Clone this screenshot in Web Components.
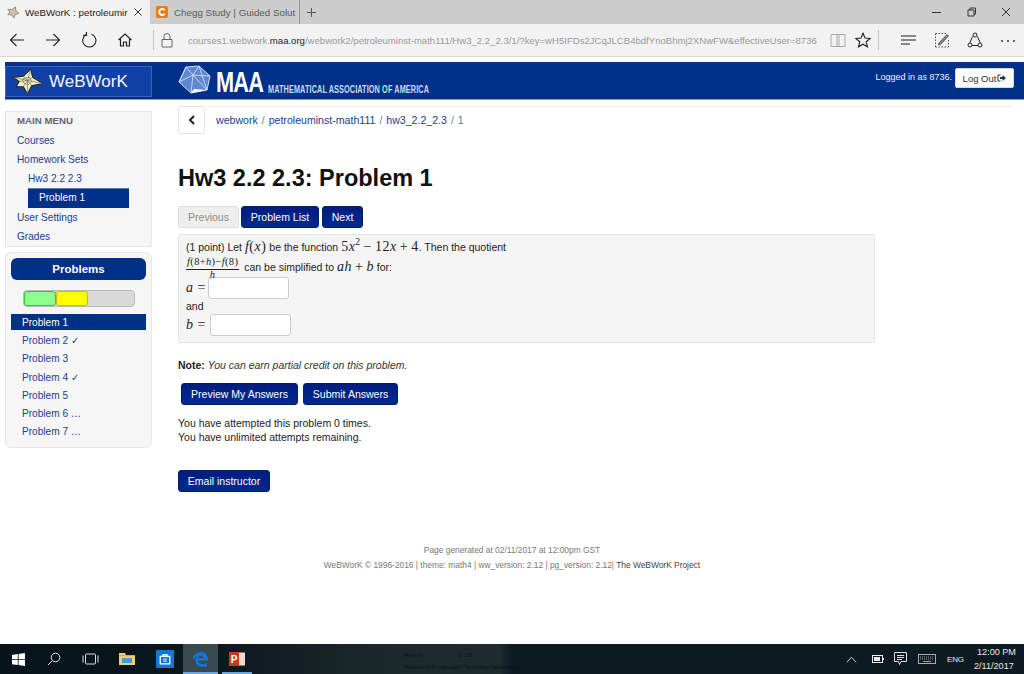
<!DOCTYPE html>
<html lang="en"><head><meta charset="utf-8"><title>WeBWorK</title>
<style>
html,body{margin:0;padding:0;height:674px;overflow:hidden;background:#fff;font-family:"Liberation Sans",Arial,sans-serif}
body{display:flex;flex-direction:column}
wb-page{flex:1;min-height:0}
</style></head><body>
<browser-chrome></browser-chrome>
<wb-page>
  <wb-header></wb-header>
  <div style="display:flex;align-items:flex-start">
    <wb-sidebar></wb-sidebar>
    <wb-content></wb-content>
  </div>
</wb-page>
<win-taskbar></win-taskbar>
<script>
function def(name, css, html){
  customElements.define(name, class extends HTMLElement{
    constructor(){super();const r=this.attachShadow({mode:"open"});r.innerHTML="<style>"+css+"</style>"+html;}
  });
}
def("wb-btn",`
:host{display:inline-flex;align-items:center;justify-content:center;box-sizing:border-box;height:22px;padding:0 8px;font-size:10.5px;color:#fff;border-radius:3px;
background:linear-gradient(#001c80,#002a8c);border:1px solid #001f6b;white-space:nowrap}
:host([off]){background:#eee;color:#8a8a8a;border-color:#ddd}`,`<slot></slot>`);

def("browser-chrome",`
:host{display:block;font-family:"Liberation Sans",Arial,sans-serif}
.tabs{height:24px;background:#ccc;display:flex;align-items:stretch;font-size:9.8px;color:#444}
.tab{width:150px;box-sizing:border-box;display:flex;align-items:center;padding-left:7px;gap:5px;white-space:nowrap}
.tab.on{background:#f2f2f2;color:#222}
.tab.b{width:150px;padding-left:6px;gap:6px;border-right:1px solid #8f8f8f;color:#5a5a5a}
.tab .t{width:100px;flex:none}
.tab.b .t{width:119px}
.plus{margin-left:5px;align-self:center;display:flex}
.win{margin-left:auto;display:flex;align-items:center}
.win svg{display:block;width:35px;height:24px}
.bar{height:32px;background:#f2f2f2;border-bottom:1px solid #d6d6d6;display:flex;align-items:center}
.ic{display:flex;width:16px;height:16px;flex:none}
.url{font-size:9.57px;color:#9a9a9a;white-space:nowrap;width:642px;flex:none}
.url b{font-weight:400;color:#222}
.sep{width:1px;height:20px;background:#c4c4c4;flex:none}
`,`
<div class="tabs">
 <div class="tab on"><svg style="flex:none" width="13" height="13" viewBox="0 0 14 14"><path d="M1 3.500 5 4 9 1 9.500 5 13 8 9 9 7.500 13 5 9.500 1 9.500 3 6.500Z" fill="#c9c6a8" stroke="#777" stroke-width=".8"/></svg><span class="t">WeBWorK : petroleumir</span>
 <svg style="margin-left:3px;flex:none" width="10" height="10" viewBox="0 0 10 10"><path d="M1.500 1.500l7 7M8.500 1.500l-7 7" stroke="#333" fill="none"/></svg></div>
 <div class="tab b"><svg style="flex:none" width="12" height="12" viewBox="0 0 12 12"><rect width="12" height="12" rx="2" fill="#ee7a14"/><path d="M8.600 4.200A3 3 0 1 0 8.600 7.800" stroke="#fff" stroke-width="2" fill="none"/></svg><span class="t">Chegg Study | Guided Solut</span></div>
 <div class="plus"><svg width="11" height="11" viewBox="0 0 11 11" style="margin-left:1px"><path d="M5.500 1v9M1 5.500h9" stroke="#555" fill="none"/></svg></div>
 <div class="win">
  <svg viewBox="0 0 35 24"><path d="M13 12.500h9" stroke="#333" fill="none"/></svg>
  <svg viewBox="0 0 35 24"><path d="M14 10h6v6h-6zM16 10V8h5.500v6H20" stroke="#333" fill="none"/></svg>
  <svg viewBox="0 0 35 24"><path d="M13 8l8 8M21 8l-8 8" stroke="#333" fill="none"/></svg>
 </div>
</div>
<div class="bar">
 <svg class="ic" style="margin-left:9px" viewBox="0 0 16 16"><path d="M15 8H1.500M7.500 2 1.500 8l6 6" stroke="#222" fill="none" stroke-width="1.100"/></svg>
 <svg class="ic" style="margin-left:20px" viewBox="0 0 16 16"><path d="M1 8h13.500M8.500 2l6 6-6 6" stroke="#222" fill="none" stroke-width="1.100"/></svg>
 <svg class="ic" style="margin-left:20px" viewBox="0 0 16 16"><path d="M5.200 2.600A6.600 6.600 0 1 0 10.500 2.200M5.500 0v3.400H2.200" stroke="#222" fill="none" stroke-width="1.100"/></svg>
 <svg class="ic" style="margin-left:20px" viewBox="0 0 16 16"><path d="M1.500 8 8 2l6.500 6M3.500 7v7h3v-4h3v4h3V7" stroke="#222" fill="none" stroke-width="1.200"/></svg>
 <span class="sep" style="margin-left:20px"></span>
 <svg class="ic" style="margin-left:5px" viewBox="0 0 16 16"><path d="M3 7.500h10v7.500H3zM5 7.500V4.500a3 3 0 0 1 6 0v3" stroke="#666" fill="none"/></svg>
 <span class="url" style="margin-left:13px">courses1.webwork.<b>maa.org</b>/webwork2/petroleuminst-math111/Hw3_2.2_2.3/1/?key=wH5IFDs2JCqJLCB4bdfYnoBhmj2XNwFW&amp;effectiveUser=8736</span>
 <svg class="ic" viewBox="0 0 16 16"><path d="M1 2.500h14v12H1zM7 2.500v12M9 2.500v12" stroke="#aaa" fill="none"/></svg>
 <svg class="ic" style="margin-left:9px" viewBox="0 0 16 16"><path d="M8 1.200 10 6l5.200.4-4 3.400 1.300 5L8 12.200 3.500 14.800l1.300-5-4-3.400L6 6Z" stroke="#222" fill="none" stroke-width="1.100"/></svg>
 <span class="sep" style="margin-left:7px"></span>
 <svg class="ic" style="margin-left:21px" viewBox="0 0 16 16"><path d="M1 4h15M1 8h15M1 12h9" stroke="#222" fill="none" stroke-width="1.100"/></svg>
 <svg class="ic" style="margin-left:18px" viewBox="0 0 16 16"><path d="M1.500 1.500h12M1.500 15h13M1.500 1.500V15M14.500 8v7" stroke="#555" stroke-dasharray="1.500 1.500" fill="none"/><path d="M5 11 13 2.500l1.500 1.500L6.500 12.500 4.500 13Z" fill="#888" stroke="#333" stroke-width=".7"/></svg>
 <svg class="ic" style="margin-left:17px" viewBox="0 0 16 16"><path d="M5.500 4.500 2.800 10.800M10.500 4.500 13.200 10.800M5.200 13.500h5.600" stroke="#222" fill="none"/><circle cx="8" cy="3" r="2" fill="none" stroke="#222"/><circle cx="3" cy="13" r="2" fill="none" stroke="#222"/><circle cx="13" cy="13" r="2" fill="none" stroke="#222"/></svg>
 <svg class="ic" style="margin-left:17px" viewBox="0 0 16 16"><circle cx="2" cy="9" r="1" fill="#333"/><circle cx="8" cy="9" r="1" fill="#333"/><circle cx="14" cy="9" r="1" fill="#333"/></svg>
</div>`);

def("wb-page",`:host{display:block;box-sizing:border-box;padding-top:5px}`,`<slot></slot>`);

def("wb-header",`
:host{display:flex;align-items:flex-start;box-sizing:border-box;height:38px;margin-left:5px;background:#003087;border-bottom:1px solid #7e9ac8;color:#fff}
.brand{box-sizing:border-box;width:147px;height:31px;margin-top:4px;background:#1140a6;border:1px solid #3c62b4;display:flex;align-items:center;padding-left:6px;gap:6px;font-size:17px;color:#f4f6fb;flex:none}
.maa{display:flex;align-items:flex-start;margin-left:26px;flex:none}
.mm{display:inline-block;font-weight:700;font-size:29px;line-height:26px;transform:scaleX(.75);transform-origin:0 0;width:46px;margin:7px 0 0 5px;letter-spacing:-1px}
.mt{display:inline-block;font-weight:700;font-size:10.5px;color:#cfdbf0;margin:16px 0 0 6px;line-height:22px;white-space:nowrap;letter-spacing:.16px;transform:scaleX(.694);transform-origin:0 0;width:161px}
.r{margin-left:auto;display:flex;align-items:flex-start;padding-right:10px}
.who{margin-top:10px;margin-right:3px;color:#eef;font-size:9px}
.out{box-sizing:border-box;width:59px;height:20px;margin-top:6px;background:#fbfbfb;color:#333;border:1px solid #d8d8d8;border-radius:2px;display:flex;align-items:center;justify-content:center;gap:1px;font-size:9.5px}
`,`
<div class="brand">
 <svg width="31" height="27" viewBox="0 0 30 26"><path d="M1 9 11 8 18 1 20 9 30 15 19 17 15 25 11 18 4 18 7 13Z" fill="#efecc9" stroke="#222" stroke-width="1"/><path d="M15 12 11 8M15 12l3-11M15 12l5-3M15 12l15 3M15 12l4 5M15 12l0 13M15 12l-4 6M15 12 7 13M15 12 1 9M11 10l6-1 2 4-3 3-4-1-2-3z" stroke="#6d6a4a" stroke-width=".6" fill="none"/></svg>
 <span>WeBWorK</span>
</div>
<div class="maa">
 <svg style="margin-top:3px" width="33" height="31" viewBox="0 0 33 31"><path d="M8 2 21 1 32 11 29 25 13 28 1 17Z" fill="#5f88d0" stroke="#cfe0fa" stroke-width="1"/><path d="M8 2 15 10 21 1M15 10 32 11M15 10 1 17M15 10 13 28M15 10 29 25M1 17 8 2M21 1 29 25" stroke="#dbe7fb" stroke-width=".8" fill="none"/><path d="M16 24 29 25 13 28Z" fill="#fff"/></svg>
 <span class="mm">MAA</span>
 <span class="mt">MATHEMATICAL ASSOCIATION OF AMERICA</span>
</div>
<div class="r"><span class="who">Logged in as 8736.</span>
<span class="out">Log Out<svg width="9" height="8" viewBox="0 0 9 8"><path d="M3.500 1H1v6h2.500" stroke="#333" fill="none"/><path d="M3 3h2.500V1L9 4 5.500 7V5H3z" fill="#333"/></svg></span></div>`);

def("wb-sidebar",`
:host{display:block;box-sizing:border-box;width:152px;padding:11px 0 0 5px;font-size:10.1px;color:#1a3d8f;flex:none}
.menu{box-sizing:border-box;height:136px;background:#f6f6f6;border:1px solid #e6e6e6;padding:0 0 0 11px}
.i{height:19.2px;line-height:19px;white-space:nowrap}
.head{font-weight:700;color:#666;font-size:9.7px;height:17.5px;line-height:15px;margin-top:1px}
.sub{padding-left:11px}
.act{margin-left:11px;width:101px;background:#003087;color:#fff;padding-left:11px;box-sizing:border-box;line-height:18px;height:19.5px;border:1px solid #5a7ab8;border-width:1px 0 0}
.prob{box-sizing:border-box;margin-top:5px;height:196px;background:#f6f6f6;border:1px solid #e8e8e8;border-radius:6px;padding:5px 5px 0 5px}
.ph{height:22px;line-height:22px;background:#003087;color:#fff;border-radius:6px;text-align:center;font-weight:700;font-size:11.5px}
.pbar{box-sizing:border-box;width:112px;height:17px;margin:10px 0 0 12px;background:#d9d9d9;border:1px solid #bbb;border-radius:4px;display:flex}
.g{box-sizing:border-box;width:32px;height:15px;background:#8cff8c;border:1px solid #27d627;border-radius:3px}
.y{box-sizing:border-box;width:32px;height:15px;background:#ff0;border:1px solid #f4a51c;border-radius:3px}
.l{margin-top:7px}
.p{height:18.2px;line-height:20px;padding-left:11px;white-space:nowrap}
.p.on{background:#003087;color:#fff;height:16px;line-height:17px;margin-bottom:1.2px}
`,`
<div class="menu">
 <div class="i head">MAIN MENU</div>
 <div class="i">Courses</div>
 <div class="i">Homework Sets</div>
 <div class="i sub">Hw3 2.2 2.3</div>
 <div class="act">Problem 1</div>
 <div class="i">User Settings</div>
 <div class="i">Grades</div>
</div>
<div class="prob">
 <div class="ph">Problems</div>
 <div class="pbar"><span class="g"></span><span class="y"></span></div>
 <div class="l">
  <div class="p on">Problem 1</div>
  <div class="p">Problem 2 ✓</div>
  <div class="p">Problem 3</div>
  <div class="p">Problem 4 ✓</div>
  <div class="p">Problem 5</div>
  <div class="p">Problem 6 …</div>
  <div class="p">Problem 7 …</div>
 </div>
</div>`);

def("wb-content",`
:host{display:block;flex:1;min-width:0;box-sizing:border-box;padding:6px 10px 0 26px;font-size:10.5px;color:#222}
.crumb{display:flex;height:28px}
.back{box-sizing:border-box;width:27px;height:28px;border:1px solid #e4e4e4;border-radius:3px;background:#fff;display:flex;align-items:center;justify-content:center}
.path{flex:1;margin-left:1px;padding-left:10px;border-top:1px solid #eee;border-radius:3px;line-height:26px;color:#1a3d8f;white-space:nowrap;font-size:10.6px}
.path i{font-style:normal;color:#777;margin:0 1px}
h1{margin:27px 0 0;font-size:23.5px;line-height:34px;font-weight:700;color:#111;white-space:nowrap}
.nav{display:flex;margin-top:11px;gap:2px}
.nav wb-btn:last-child{margin-left:1px}
.box{box-sizing:border-box;width:697px;height:109px;margin-top:6px;background:#f5f5f5;border:1px solid #e6e6e6;border-radius:2px;padding:5px 0 0 7px;line-height:14px;white-space:nowrap}
.m{font-family:"Liberation Serif","DejaVu Serif",serif;font-size:14px;letter-spacing:.5px}
.m i{font-style:italic}
.m sup{font-size:9.5px;line-height:0}
.m u{text-decoration:none;margin:0 3px}
.ln{display:flex;align-items:center}
.frac{display:inline-flex;flex-direction:column;align-items:center;font-family:"Liberation Serif",serif;font-size:10.5px;line-height:10px;margin-right:2px;letter-spacing:.35px;position:relative;top:-1px}
.frac span:first-child{border-bottom:1px solid #222;padding:0 1px 2px}
.frac span:last-child{font-style:italic;height:6px;line-height:10px}
.inp{display:inline-block;box-sizing:border-box;width:81px;height:22px;background:#fff;border:1px solid #ccc;border-radius:3px}
.lb{display:inline-block}
.note{margin-top:15px;line-height:14px}
.note em{color:#333}
.acts{display:flex;gap:5px;margin:11px 0 0 3px}
.att{margin-top:11px;line-height:14px}
.mail{margin-top:26px}
.foot{margin:51px 0 0 -168px;text-align:center;font-size:8.4px;color:#777;line-height:15px}
.foot b{font-weight:400;color:#444}
`,`
<div class="crumb">
 <span class="back"><svg width="8" height="10" viewBox="0 0 8 10"><path d="M6 1 2 5l4 4" stroke="#222" stroke-width="2" fill="none"/></svg></span>
 <div class="path">webwork <i>/</i> petroleuminst-math111 <i>/</i> hw3_2.2_2.3 <i>/</i> <span style="color:#777">1</span></div>
</div>
<h1>Hw3 2.2 2.3: Problem 1</h1>
<div class="nav"><wb-btn off style="width:61px">Previous</wb-btn><wb-btn style="width:78px">Problem List</wb-btn><wb-btn style="width:41px">Next</wb-btn></div>
<div class="box">
 <div style="height:14px">(1 point) Let <span class="m"><i>f</i>(<i>x</i>)</span> be the function <span class="m">5<i>x</i><sup>2</sup><u>−</u>12<i>x</i><u>+</u>4</span>. Then the quotient</div>
 <div class="ln" style="height:18px;margin-top:4px"><span class="frac"><span><i>f</i>(8+<i>h</i>)−<i>f</i>(8)</span><span>h</span></span>&nbsp;can be simplified to&nbsp;<span class="m"><i>ah</i><u>+</u><i>b</i></span>&nbsp;for:</div>
 <div class="ln" style="height:23px"><span class="m lb" style="width:22px"><i>a</i> =</span><span class="inp"></span></div>
 <div style="height:14px">and</div>
 <div class="ln" style="height:23px"><span class="m lb" style="width:24px"><i>b</i> =</span><span class="inp"></span></div>
</div>
<div class="note"><b>Note:</b> <em>You can earn partial credit on this problem.</em></div>
<div class="acts"><wb-btn style="width:117px">Preview My Answers</wb-btn><wb-btn style="width:95px">Submit Answers</wb-btn></div>
<div class="att">You have attempted this problem 0 times.<br>You have unlimited attempts remaining.</div>
<div class="mail"><wb-btn style="width:92px">Email instructor</wb-btn></div>
<div class="foot">Page generated at 02/11/2017 at 12:00pm GST<br>WeBWorK © 1996-2016 | theme: math4 | ww_version: 2.12 | pg_version: 2.12| <b>The WeBWorK Project</b></div>`);

def("win-taskbar",`
:host{display:flex;align-items:stretch;height:30px;background:linear-gradient(90deg,#07141c 0,#0b161d 200px,#1d2a2d 400px,#1e2b2e 500px,#0c1a22 512px,#0d1a22 1024px);color:#e8e8e8;font-family:"Liberation Sans",sans-serif;flex:none;position:relative}
.s{width:36px;display:flex;align-items:center;justify-content:center;flex:none}
.s.act{background:#3a4a50;width:35px;box-shadow:inset 0 -2px 0 #6fa8d8}
.s.under{box-shadow:inset 0 -2px 0 #6fa8d8;width:30px;margin-left:4px}
.tray{margin-left:auto;display:flex;align-items:center}
.ck{width:40px;text-align:left;font-size:9.1px;line-height:14px;margin-right:10px;white-space:nowrap}
.ck span{display:block;padding-left:3px}
.w{display:flex}
.mid{position:absolute;left:404px;top:5px;font-size:5px;color:#0b1316;white-space:nowrap;line-height:12px}
`,`
<span class="s"><svg width="13" height="13" viewBox="0 0 13 13"><path d="M0 2 5.800 1.100V6.200H0zM6.600 1 13 0V6.200H6.600zM0 7H5.800v5L0 11.200zM6.600 7H13v6L6.600 12z" fill="#fff"/></svg></span>
<span class="s"><svg width="14" height="14" viewBox="0 0 14 14"><circle cx="8.500" cy="5.500" r="4.300" fill="none" stroke="#e8e8e8"/><path d="M5.500 8.500 1 13" stroke="#e8e8e8"/></svg></span>
<span class="s"><svg width="17" height="12" viewBox="0 0 17 12"><rect x="3.500" y="1" width="10" height="10" rx="1" fill="none" stroke="#ddd"/><path d="M1 2.500v7M16 2.500v7" stroke="#ddd" fill="none"/></svg></span>
<span class="s" style="width:38px"><svg width="16" height="14" viewBox="0 0 16 14"><path d="M0 1h6l1 2h9v10H0z" fill="#f1cf6c"/><path d="M3 6h10v5H3z" fill="#3aa1d8"/><path d="M0 3h16v1H0z" fill="#d9a93a"/></svg></span>
<span class="s" style="width:37px"><svg width="18" height="18" viewBox="0 0 17 17"><rect width="17" height="17" fill="#0f78d4"/><path d="M4 6h9v7H4zM6.500 6V4.500h4V6" fill="none" stroke="#fff" stroke-width="1.200"/><path d="M7 8h1.300v1.300H7zM8.800 8h1.300v1.300H8.800zM7 9.800h1.300v1.300H7zM8.800 9.800h1.300v1.300H8.800z" fill="#fff"/></svg></span>
<span class="s act"><svg width="17" height="17" viewBox="0 0 18 18"><path d="M1 9.500C1 4 5 1 9.500 1 14 1 17 4 17 10H6c.2 3 4.500 5 10 2.600v3.600C10 18 3 16 3.500 9.500 4 6 7 5 8.500 5 6 5 3 6.800 1 9.500ZM6.200 7.600h6.300C12.400 4.700 7 4.500 6.200 7.600Z" fill="#1178d6"/></svg></span>
<span class="s under"><svg width="16" height="16" viewBox="0 0 16 16"><rect x="6" y="1.500" width="10" height="13" fill="#f2d6cf"/><rect y="1" width="10" height="14" fill="#c8391d"/><text x="1.700" y="11.500" font-size="10" font-weight="700" font-family="Liberation Sans" fill="#fff">P</text></svg></span>
<span class="mid">Room 8 &nbsp; &nbsp; &nbsp; &nbsp; &nbsp; &nbsp; &nbsp; &nbsp; &nbsp; &nbsp; &nbsp; &nbsp; &nbsp; S 128<br>Powered by PI Information Technology Department</span>
<div class="tray">
 <span class="w" style="margin-right:15px"><svg width="11" height="7" viewBox="0 0 12 7"><path d="M1 6.500 6 1l5 5.500" stroke="#ddd" fill="none"/></svg></span>
 <span class="w" style="margin-right:10px"><svg width="12" height="8" viewBox="0 0 12 8"><rect x=".5" y=".5" width="10" height="7" fill="none" stroke="#eee"/><rect x="2" y="2" width="6" height="4" fill="#eee"/><path d="M11.500 3v2" stroke="#eee"/></svg></span>
 <span class="w" style="margin-right:11px"><svg width="13" height="14" viewBox="0 0 13 14"><path d="M.5.500h12v9H7l-1.500 3-1-3h-4z" fill="none" stroke="#ddd"/><path d="M3 3.500h7M3 5.500h7M3 7.500h5" stroke="#ddd"/></svg></span>
 <span class="w" style="margin-right:11px"><svg width="18" height="10" viewBox="0 0 18 10"><rect x=".5" y=".5" width="17" height="9" fill="none" stroke="#aaa"/><path d="M2 3h14M2 5h14" stroke="#999" stroke-dasharray="1 1"/><path d="M5 7.500h8" stroke="#aaa"/></svg></span>
 <span style="margin-right:10px;font-size:8px;letter-spacing:-.1px">ENG</span>
 <span class="ck"><span>12:00 PM</span>2/11/2017</span>
</div>`);
</script>
</body></html>
